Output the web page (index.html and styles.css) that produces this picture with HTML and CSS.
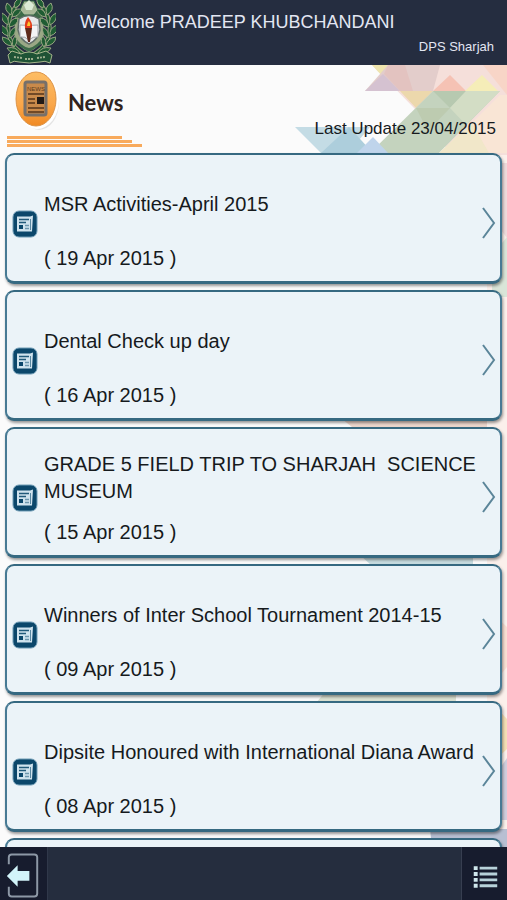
FILE: index.html
```html
<!DOCTYPE html>
<html lang="en">
<head>
    <meta charset="UTF-8">
    <meta name="viewport" content="width=device-width, initial-scale=1.0">
    <title>News</title>
    <link rel="stylesheet" href="styles.css">
</head>
<body>
    <!-- shared icons -->
    <svg class="sprite" aria-hidden="true">
        <symbol id="paper" viewBox="0 0 26 28">
            <rect x="1" y="1" width="24" height="26" rx="6" fill="#0b476b" stroke="#6f9cb5"/>
            <path d="M5 6.500h13l3-1-1 16H5z" fill="#cfe3ee"/>
            <path d="M7 9.500h10M7 12.500h7" stroke="#215a7a" stroke-width="1.500"/>
            <rect x="7" y="15" width="4" height="4" fill="#0b476b"/>
            <path d="M13 15.500h4M13 18.500h4" stroke="#6d97ae" stroke-width="1.500"/>
            <path d="M18.500 9v11" stroke="#5a88a2"/>
        </symbol>
        <symbol id="arrow" viewBox="0 0 14 34">
            <path d="M1 2l11 15L1 32" fill="none" stroke="#5b8599" stroke-width="2"/>
        </symbol>
        <symbol id="branch" viewBox="0 0 30 60">
            <path d="M26 56C10 49 4 36 7 22Q9 10 17 3" fill="none" stroke="#8d9a78" stroke-width="4"/>
            <path d="M26 56C10 49 4 36 7 22Q9 10 17 3" fill="none" stroke="#1d5a30" stroke-width="2"/>
            <g fill="#1f5c33" stroke="#97a582" stroke-width="1">
                <path d="M13 8Q10 1 19-2Q20 5 13 8z"/>
                <path d="M9 15Q1 10 5 3Q12 7 9 15z"/>
                <path d="M10 17Q18 16 19 9Q11 8 10 17z"/>
                <path d="M6 25Q-2 21 0 13Q8 17 6 25z"/>
                <path d="M7 27Q16 26 16 18Q8 18 7 27z"/>
                <path d="M6 36Q-3 33-1 25Q7 28 6 36z"/>
                <path d="M8 38Q15 34 13 27Q6 31 8 38z"/>
                <path d="M10 46Q1 45 0 37Q9 38 10 46z"/>
                <path d="M12 47Q17 41 13 36Q8 42 12 47z"/>
                <path d="M18 53Q9 55 5 48Q14 46 18 53z"/>
            </g>
        </symbol>
    </svg>

    <header class="topbar">
        <svg class="crest" viewBox="0 0 58 65" role="img" aria-label="School crest">
            <path d="M16 12Q29 4 42 12L44 34Q40 48 29 52Q18 48 14 34z" fill="#9aa886"/>
            <path d="M17 12Q29 5 41 12L42 18H16zM15 36Q20 46 29 48Q38 46 43 36L42 44L29 52L16 44z" fill="#3d6b49"/>
            <use href="#branch" x="2" y="0" width="30" height="60"/>
            <use href="#branch" width="30" height="60" transform="translate(56 0) scale(-1 1)"/>
            <path d="M20 10l4-9h10l4 9-4 5H24z" fill="#a9b999" stroke="#2f6340"/>
            <path d="M24 5l5-5 5 5-2 5h-6z" fill="#dcebd6"/>
            <path d="M19 19Q29 12 39 19L40 30Q38 40 29 44Q20 40 18 30z" fill="#e6e8e9" stroke="#626f69" stroke-width="1.500"/>
            <path d="M20 25q5-1 8 3q4-4 10-3v12q-5-1-9 3q-4-4-9-3z" fill="#f4f4f6" stroke="#a3a6a9"/>
            <path d="M25 28h7l-2 14h-2z" fill="#5e2a1b"/>
            <path d="M25 28q-1-6 3-11q5 6 4 11z" fill="#e23b1c"/>
            <path d="M27 26q0-3 2-5q2 3 1 5z" fill="#ffc52d"/>
            <path d="M12 51l9 3q8-4 16 0l9-3l6 4-2 8q-5-3-10-1q-11 2-21 0q-5-2-9 1l-2-8z" fill="#1f5335" stroke="#a5b58b"/>
            <path d="M14 57l8 1M25 59h9M37 58l8-1" stroke="#9dae8d" stroke-width="2" stroke-dasharray="2 1"/>
        </svg>
        <div class="user">
            <p class="welcome">Welcome PRADEEP KHUBCHANDANI</p>
            <p class="school">DPS Sharjah</p>
        </div>
    </header>

    <main class="content">
        <!-- triangle pattern behind the list -->
        <svg class="pattern" viewBox="0 0 217 782" aria-hidden="true">
            <path d="M82 0h135v782h-20V110z" fill="#fbf0eb"/>
            <path d="M82 0h135v90h-55L125 44z" fill="#f5dfda"/>
            <path d="M82 0h20l-9 12z" fill="#eee4ae"/>
            <path d="M98 0h52l-7 26H75z" fill="#e3cdcb"/>
            <path d="M75 26l18-17 17 17z" fill="#d5c2d1"/>
            <path d="M98 0h17l8 26h-13L94 9z" fill="#e3c3c0"/>
            <path d="M143 26l17-16 16 16z" fill="#f5c2b4"/>
            <path d="M175 26l17-16 16 16z" fill="#f5edb8"/>
            <path d="M193 0h24v30z" fill="#f8d5c7"/>
            <path d="M110 26h33l-17 17z" fill="#ecd8ac"/>
            <path d="M143 26h67l-61 62H80z" fill="#c4d3be"/>
            <path d="M143 26h33l-16 17z" fill="#b7c9b0"/>
            <path d="M126 43l34 0-22 23z" fill="#bdcbb0"/>
            <path d="M176 26h34l-34 34-16-17z" fill="#d3ddc5"/>
            <path d="M165 73l17-15 20 30h-53z" fill="#f1e7c9"/>
            <path d="M182 58l28-28h7v58h-18z" fill="#f9e5d5"/>
            <path d="M5 62h75L58 88H31z" fill="#c4dce5"/>
            <path d="M31 88l28-26 24 26z" fill="#adcedc"/>
            <path d="M67 88l16-16 15 16z" fill="#bfd4eb"/>
            <path d="M202 98h15v75l-15-20z" fill="#eedadb"/>
            <path d="M202 190l15-18v60h-15z" fill="#d9e5d8"/>
            <path d="M52 354h145v12H67z" fill="#ecd6cc"/>
            <path d="M70 490h113v10H81z" fill="#c7dce0"/>
            <path d="M202 548l15 14v40l-15 18z" fill="#f8dfd3"/>
            <path d="M36 626h130v12H26z" fill="#dce2d3"/>
            <path d="M202 638l15 16v30l-15 14z" fill="#f4dfb5"/>
            <path d="M202 715l15-22v62h-15z" fill="#d0cedd"/>
            <path d="M140 764h77v18H142z" fill="#b8bfd2"/>
        </svg>

        <div class="heading">
            <div class="heading-left">
                <div class="title-row">
                    <svg class="news-icon" viewBox="0 0 46 62" aria-hidden="true">
                        <defs>
                            <linearGradient id="orange" x1="0" y1="0" x2="0" y2="1">
                                <stop offset="0" stop-color="#fdbd64"/>
                                <stop offset=".6" stop-color="#faa74a"/>
                                <stop offset="1" stop-color="#f08a24"/>
                            </linearGradient>
                        </defs>
                        <ellipse cx="25" cy="32" rx="20" ry="28" fill="#e4e4e4"/>
                        <ellipse cx="23" cy="30" rx="22" ry="29" fill="#fff"/>
                        <ellipse cx="22" cy="29" rx="20" ry="27" fill="url(#orange)" stroke="#dc9347"/>
                        <rect x="11" y="12" width="21" height="33" rx="2" fill="#c98a4b" stroke="#77706a" stroke-width="3"/>
                        <text class="icon-text" x="22" y="21" text-anchor="middle">NEWS</text>
                        <path d="M14 24h16M14 29h7M14 33h7M14 38h16M14 42h16" stroke="#54351b" stroke-width="1.500"/>
                        <path d="M23 27h7v7h-7z" fill="#211a16"/>
                    </svg>
                    <h1>News</h1>
                </div>
                <div class="stripes"><span></span><span></span><span></span></div>
            </div>
            <p class="update">Last Update 23/04/2015</p>
        </div>

        <ul class="news-list">
            <li>
                <a class="card" href="#">
                    <svg class="paper"><use href="#paper"/></svg>
                    <div class="text">
                        <h2>MSR Activities-April 2015</h2>
                        <p>( 19 Apr 2015 )</p>
                    </div>
                    <svg class="arrow"><use href="#arrow"/></svg>
                </a>
            </li>
            <li>
                <a class="card" href="#">
                    <svg class="paper"><use href="#paper"/></svg>
                    <div class="text">
                        <h2>Dental Check up day</h2>
                        <p>( 16 Apr 2015 )</p>
                    </div>
                    <svg class="arrow"><use href="#arrow"/></svg>
                </a>
            </li>
            <li>
                <a class="card" href="#">
                    <svg class="paper"><use href="#paper"/></svg>
                    <div class="text">
                        <h2>GRADE 5 FIELD TRIP TO SHARJAH&nbsp; SCIENCE MUSEUM</h2>
                        <p>( 15 Apr 2015 )</p>
                    </div>
                    <svg class="arrow"><use href="#arrow"/></svg>
                </a>
            </li>
            <li>
                <a class="card" href="#">
                    <svg class="paper"><use href="#paper"/></svg>
                    <div class="text">
                        <h2>Winners of Inter School Tournament 2014-15</h2>
                        <p>( 09 Apr 2015 )</p>
                    </div>
                    <svg class="arrow"><use href="#arrow"/></svg>
                </a>
            </li>
            <li>
                <a class="card" href="#">
                    <svg class="paper"><use href="#paper"/></svg>
                    <div class="text">
                        <h2>Dipsite Honoured with International Diana Award</h2>
                        <p>( 08 Apr 2015 )</p>
                    </div>
                    <svg class="arrow"><use href="#arrow"/></svg>
                </a>
            </li>
            <li><div class="card"></div></li>
        </ul>
    </main>

    <footer class="bottombar">
        <button type="button" class="back" aria-label="Back">
            <svg viewBox="0 0 48 53">
                <path d="M9 17V10q0-3 3-3h23q3 0 3 3v37q0 3-3 3H12q-3 0-3-3V40" fill="none" stroke="#8d98a6" stroke-width="2"/>
                <path d="M7 29L18 18v6h12v10H18v6z" fill="#d2f4fa"/>
            </svg>
        </button>
        <button type="button" class="menu" aria-label="Menu">
            <svg viewBox="0 0 46 53">
                <path d="M12 21h4M12 27h4M12 33h4M12 39h4" stroke="#d0e7ec" stroke-width="4"/>
                <path d="M18 21h18M18 27h18M18 33h18M18 39h18" stroke="#b8d2da" stroke-width="3"/>
            </svg>
        </button>
    </footer>
</body>
</html>
```
FILE: styles.css
```css
* {
    box-sizing: border-box;
}
body {
    font-family: "Liberation Sans", Arial, sans-serif;
    background-color: #fbfbfb;
    color: #161a1d;
    margin: 0;
    height: 100vh;
    display: flex;
    flex-direction: column;
    overflow: hidden;
}
h1, h2, p, ul {
    margin: 0;
    padding: 0;
    font-weight: normal;
}
.sprite {
    position: absolute;
    width: 0;
    height: 0;
}

/* top bar */
.topbar {
    display: flex;
    flex: none;
    height: 65px;
    background-color: #252d40;
    color: #e3e6f2;
}
.crest {
    width: 58px;
    height: 65px;
}
.user {
    flex: 1;
    padding: 10px 13px 0 22px;
}
.welcome {
    font-size: 18px;
    line-height: 24px;
}
.school {
    font-size: 13px;
    line-height: 16px;
    margin-top: 5px;
    text-align: right;
}

/* page content */
.content {
    flex: 1;
    min-height: 0;
    position: relative;
    overflow: hidden;
}
.pattern {
    position: absolute;
    top: 0;
    right: 0;
    width: 217px;
    height: 782px;
}
.heading {
    position: relative;
    display: flex;
    justify-content: space-between;
    align-items: flex-end;
    height: 88px;
    padding: 0 11px 6px 7px;
}
.title-row {
    display: flex;
    align-items: center;
    gap: 8px;
    padding-left: 7px;
}
.news-icon {
    width: 46px;
    height: 62px;
}
.icon-text {
    font-size: 6px;
    fill: #5c3c20;
}
h1 {
    font-family: Lato, sans-serif;
    font-size: 22px;
    line-height: 32px;
    font-weight: bold;
    color: #30231d;
    padding-top: 3px;
}
.stripes {
    display: flex;
    flex-direction: column;
    gap: 1px;
    padding-top: 4px;
}
.stripes span {
    height: 3px;
    width: 115px;
    background-color: #f8aa5c;
}
.stripes span:nth-child(2) {
    width: 125px;
}
.stripes span:nth-child(3) {
    width: 135px;
}
.update {
    font-size: 17px;
    line-height: 24px;
    padding-bottom: 6px;
}

/* news list */
.news-list {
    position: relative;
    list-style: none;
    display: flex;
    flex-direction: column;
    gap: 6px;
    padding: 0 5px;
}
.card {
    display: flex;
    align-items: center;
    min-height: 131px;
    padding: 0 4px 0 5px;
    border: 2px solid #477a94;
    border-top-color: #366981;
    border-bottom: 3px solid #366981;
    border-radius: 9px;
    background-color: #ebf3f8;
    box-shadow: 1px 2px 3px rgba(0, 0, 0, 0.4);
    color: inherit;
    text-decoration: none;
}
.paper {
    flex: none;
    width: 26px;
    height: 28px;
    margin-top: 12px;
}
.text {
    flex: 1;
    padding: 13px 0 0 6px;
    font-size: 20px;
    line-height: 27px;
}
.text h2 {
    display: flex;
    align-items: center;
    min-height: 54px;
    font-size: 20px;
}
.text p {
    margin-top: 14px;
}
.arrow {
    flex: none;
    width: 14px;
    height: 34px;
    margin-top: 10px;
}

/* bottom bar */
.bottombar {
    position: relative;
    display: flex;
    flex: none;
    justify-content: space-between;
    height: 53px;
    background-color: #252d3e;
}
.bottombar button {
    height: 53px;
    padding: 0;
    border: 0;
    background-color: #171c2e;
    cursor: pointer;
}
.bottombar svg {
    display: block;
    width: 100%;
    height: 100%;
}
.bottombar .back {
    width: 48px;
    border-right: 1px solid #30384a;
}
.bottombar .menu {
    width: 46px;
    border-left: 1px solid #373e50;
}
```
